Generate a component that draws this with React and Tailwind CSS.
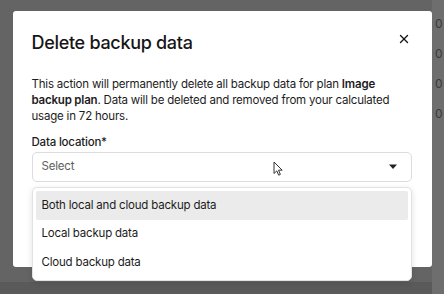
import { X } from 'lucide-react';

const options = ['Both local and cloud backup data', 'Local backup data', 'Cloud backup data'];

const Caret = () => (
  <svg width="10" height="6" viewBox="0 0 10 6" className="text-[#222]">
    <path d="M1 0.5h8L5 5z" fill="currentColor" />
  </svg>
);

const Cursor = () => (
  <svg width="10" height="15" viewBox="0 0 10 15">
    <path d="M1 1v11.5l2.8-2.6 1.9 4.3 1.7-0.8-1.9-4.2H9.2z" fill="#fff" stroke="#333" strokeWidth="1" strokeLinejoin="round" />
  </svg>
);

export default function App() {
  return (
    <div
      className="relative w-[444px] h-[294px] overflow-hidden bg-[#646464] flex"
      style={{ fontFamily: 'Inter, "Noto Sans", sans-serif' }}
    >
      {/* page behind the overlay */}
      <div className="flex-1 flex flex-col">
        <div className="flex-1" />
        <div className="h-[12px] bg-[#5a5a5a]" />
      </div>
      <div className="w-[12px] bg-[#6e6e6e] flex flex-col pt-[16px] gap-[14px] pl-[3px] text-[12px] leading-[16px] text-[#3a3a3a]">
        <span>0</span>
        <span>0</span>
        <span>0</span>
        <span>0</span>
      </div>

      {/* modal */}
      <div className="absolute inset-0 flex justify-center pt-[11px]">
        <div className="w-[419px] h-[256px] bg-white rounded-[3px] pl-[19px] pr-[20px] pt-[20px]">
          <div className="flex items-start justify-between">
            <h2 className="text-[18px] leading-[24px] font-medium text-[#161616] tracking-[-0.3px]">Delete backup data</h2>
            <X size={14} strokeWidth={2.4} className="text-[#161616] mt-[1px] mr-[1px]" />
          </div>

          <p className="mt-[21px] text-[11.5px] leading-[16px] tracking-[-0.2px] text-[#1c1c1c] pr-[10px]">
            This action will permanently delete all backup data for plan <b className="font-semibold">Image backup plan</b>. Data will be deleted and removed from your calculated usage in 72 hours.
          </p>

          <div className="mt-[10px] text-[11.5px] leading-[16px] tracking-[-0.2px] font-medium text-[#1c1c1c]">Data location*</div>

          <div className="relative mt-[2px]">
            <div className="h-[30px] border border-[#dcdcdc] rounded-[5px] flex items-center justify-between pl-[9px] pr-[13px] text-[11.5px] tracking-[-0.2px] text-[#5e5e5e]">
              <span>Select</span>
              <Caret />
            </div>
            <div className="absolute left-[241px] top-[9px]">
              <Cursor />
            </div>

            {/* dropdown menu */}
            <div className="absolute left-0 right-0 top-[35px] h-[94px] bg-white border border-[#e2e2e2] rounded-[5px] shadow-[0_2px_6px_rgba(0,0,0,0.12)] p-[3px] flex flex-col">
              {options.map((o, i) => (
                <div
                  key={o}
                  className={`h-[29.5px] flex items-center pl-[6px] rounded-[2px] text-[11.5px] tracking-[-0.2px] text-[#1c1c1c] ${i === 0 ? 'bg-[#ebebeb]' : ''}`}
                >
                  {o}
                </div>
              ))}
            </div>
          </div>
        </div>
      </div>
    </div>
  );
}
